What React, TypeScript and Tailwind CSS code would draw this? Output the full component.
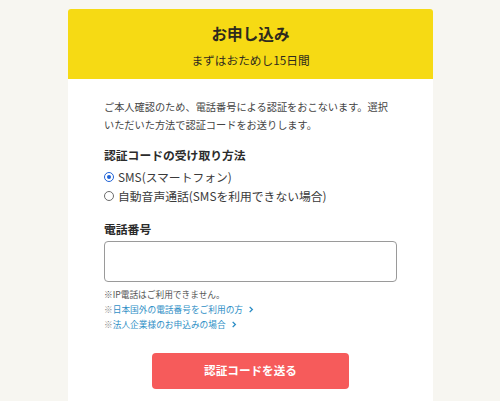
import React from "react";

export default function App() {
  return (
    <div
      className="w-[500px] h-[401px] overflow-hidden bg-[#f7f6f1] pt-[9px]"
      style={{ fontFamily: '"Noto Sans CJK JP", "Noto Sans", sans-serif' }}
    >
      <div className="mx-auto ml-[68px] w-[365px] h-[420px] bg-white rounded-t-[3px] overflow-hidden">
        <div className="bg-[#f6da14] pt-[12px] pb-[10px] text-center text-[#2e2a1e]">
          <div className="text-[15.6px] leading-[24px] font-bold">お申し込み</div>
          <div className="mt-[6px] text-[11.7px] leading-[18px]">まずはおためし15日間</div>
        </div>
        <div className="px-[36px] pt-[19px] text-[#3a3a3a]">
          <p className="text-[10.2px] leading-[18px] text-[#444]">
            ご本人確認のため、電話番号による認証をおこないます。選択いただいた方法で認証コードをお送りします。
          </p>
          <div className="mt-[12px] text-[11.8px] leading-[18px] font-bold text-[#2b2b2b]">
            認証コードの受け取り方法
          </div>
          <div className="mt-[3px] text-[11.8px] leading-[19px] text-[#3a3a3a]">
            <label className="flex items-center gap-[4px]">
              <span className="w-[10px] h-[10px] rounded-full border-[1.5px] border-[#1f62d6] flex items-center justify-center">
                <span className="w-[4px] h-[4px] rounded-full bg-[#1f62d6]" />
              </span>
              <span>SMS(スマートフォン)</span>
            </label>
            <label className="flex items-center gap-[4px]">
              <span className="w-[10px] h-[10px] rounded-full border border-[#6b6b6b]" />
              <span>自動音声通話(SMSを利用できない場合)</span>
            </label>
          </div>
          <div className="mt-[15px] text-[11.8px] leading-[18px] font-bold text-[#2b2b2b]">
            電話番号
          </div>
          <div className="mt-[3px] h-[41px] w-full rounded-[4px] border border-[#9a9a9a] bg-white" />
          <div className="mt-[5px] text-[8.7px] leading-[15px]">
            <div className="text-[#555]">※IP電話はご利用できません。</div>
            <div className="flex items-center">
              <span className="text-[#888]">※</span>
              <span className="text-[#2f8fc6]">日本国外の電話番号をご利用の方</span>
              <Chevron />
            </div>
            <div className="flex items-center">
              <span className="text-[#888]">※</span>
              <span className="text-[#2f8fc6]">法人企業様のお申込みの場合</span>
              <Chevron />
            </div>
          </div>
          <div className="mt-[21px] flex justify-center">
            <div className="w-[197px] h-[36px] rounded-[4px] bg-[#f65b5b] flex items-center justify-center text-white font-bold text-[11.6px]">
              認証コードを送る
            </div>
          </div>
        </div>
      </div>
    </div>
  );
}

function Chevron() {
  return (
    <svg width="6" height="7" viewBox="0 0 6 8" className="ml-[5px]">
      <path d="M1.5 1 L4.5 4 L1.5 7" fill="none" stroke="#2f8fc6" strokeWidth="1.6" />
    </svg>
  );
}
